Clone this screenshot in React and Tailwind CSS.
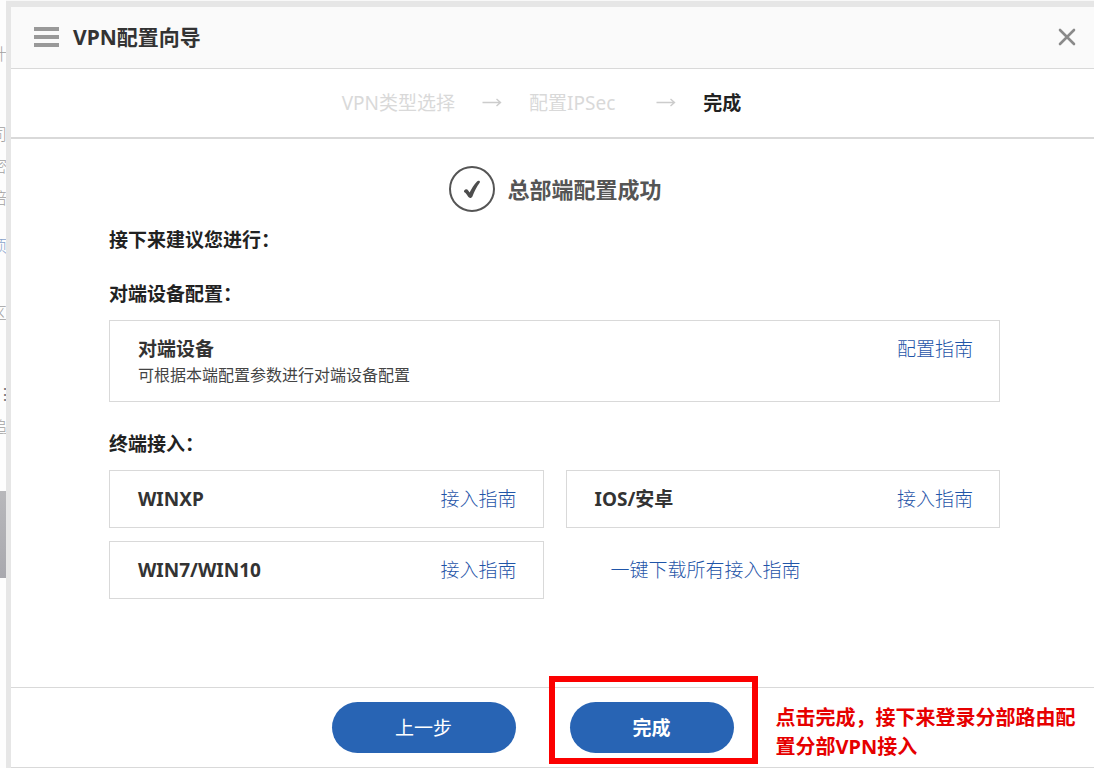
import React from 'react'

const fragments = [
    { text: '计', className: '-ml-[9px] h-[80px] text-neutral-400' },
    { text: '司', className: '-ml-[9px] h-[32px] text-neutral-400' },
    { text: '密', className: '-ml-[9px] h-[32px] text-neutral-400' },
    { text: '倍', className: '-ml-[9px] h-[48px] text-neutral-400' },
    { text: '项', className: '-ml-[9px] h-[67px] text-[#8aa4cc]' },
    { text: '区', className: '-ml-[9px] h-[81px] text-neutral-400' },
    { text: '⋮', className: '-ml-[3px] h-[33px] text-neutral-500 text-center' },
    { text: '追', className: '-ml-[9px] h-[75px] text-neutral-400' },
]

const steps = [
    { label: 'VPN类型选择', className: 'text-[#d9d9d9]' },
    { label: '配置IPSec', className: 'text-[#d9d9d9] pr-[14px]' },
    { label: '完成', className: 'text-[#222] font-bold' },
]

const StepArrow = () => (
    <svg width="20" height="12" viewBox="0 0 20 12" fill="none" stroke="#cccccc" strokeWidth="1.4" aria-hidden="true">
        <path d="M0.5 5.5H18.5M14.5 2L18.5 5.5L14.5 9" />
    </svg>
)

const GuideCard = ({ title, desc, link }) => (
    <div className="flex justify-between items-start border border-[#d9d9d9] pl-7 pr-[26px] py-[14px]">
        <div>
            <h3 className="text-[19px] leading-[28px] font-bold text-[#333]">{title}</h3>
            {desc && <p className="text-[16px] leading-6 text-[#444]">{desc}</p>}
        </div>
        <a href="#guide" className="text-[19px] leading-[28px] font-light text-[#1f55a8]">{link}</a>
    </div>
)

const SectionTitle = ({ children }) => (
    <h2 className="text-[19px] leading-[28px] font-bold text-[#222]">{children}</h2>
)

const App = () => {
    return (
        <div className="flex min-h-screen bg-white font-['Noto_Sans','Noto_Sans_CJK_SC',sans-serif]">
            {/* Page behind the dialog */}
            <aside className="w-[6px] shrink-0 overflow-hidden bg-[#fdfdfd] pt-[43px]">
                {fragments.map((item, index) => (
                    <div key={index} className={`w-4 text-[16px] leading-[22px] font-light ${item.className}`}>
                        {item.text}
                    </div>
                ))}
                <div className="h-[87px] bg-gradient-to-b from-[#b8b8bb] to-[#a8a8ae]" />
            </aside>

            <div className="flex-1 flex border-t border-[#f8f8f8] min-w-0">
                <main className="flex-1 flex flex-col min-w-0 border-l-[5px] border-t-[6px] border-[#e6e6e6]">
                    <header className="flex items-center justify-between h-[62px] pl-[23px] pr-[18px] bg-[#fafafa] border-b border-[#d9d9d9]">
                        <div className="flex items-center gap-[14px] pb-[2px]">
                            <svg width="25" height="20" viewBox="0 0 25 20" fill="#999999" aria-hidden="true">
                                <rect width="25" height="4" />
                                <rect y="8" width="25" height="4" />
                                <rect y="16" width="25" height="4" />
                            </svg>
                            <h1 className="text-[21px] leading-[28px] font-bold text-[#333]">VPN配置向导</h1>
                        </div>
                        <button type="button" aria-label="关闭" className="pb-[2px] cursor-pointer">
                            <svg width="18" height="18" viewBox="0 0 18 18" fill="none" stroke="#8a8a8a" strokeWidth="2.6" strokeLinecap="round">
                                <path d="M2 2L16 16M16 2L2 16" />
                            </svg>
                        </button>
                    </header>

                    <ol className="flex items-center justify-center gap-[27px] h-[70px] pr-[22px] border-b-2 border-[#d9d9d9] text-[19px] leading-[28px]">
                        {steps.map((step, index) => (
                            <React.Fragment key={step.label}>
                                {index > 0 && <li><StepArrow /></li>}
                                <li className={step.className}>{step.label}</li>
                            </React.Fragment>
                        ))}
                    </ol>

                    <section className="flex-1 pl-[98px] pr-[94px] pt-[27px]">
                        <div className="flex items-center justify-center gap-3 pl-[2px]">
                            <svg width="46" height="46" viewBox="0 0 46 46" fill="none" aria-hidden="true">
                                <circle cx="23" cy="23" r="22" stroke="#555555" strokeWidth="2" />
                                <path d="M15.4 24.2C16.6 22.8 18.4 23.2 19.2 24.4L20.6 26.6C22.4 22.6 25 18.4 28 15.4C29.2 14.2 31.6 14.8 30.8 16.4C27.6 20.8 25.4 25.4 23.4 30.4C22.6 32.2 20.2 32.4 19.2 30.8C18.2 28.8 17 27.2 15.4 26.2C14.8 25.6 14.9 24.8 15.4 24.2Z" fill="#4d4d4d" />
                            </svg>
                            <p className="text-[22px] leading-[32px] font-bold text-[#555]">总部端配置成功</p>
                        </div>

                        <div className="mt-[14px]">
                            <SectionTitle>接下来建议您进行：</SectionTitle>
                        </div>

                        <div className="mt-[26px] mb-3">
                            <SectionTitle>对端设备配置：</SectionTitle>
                        </div>
                        <GuideCard title="对端设备" desc="可根据本端配置参数进行对端设备配置" link="配置指南" />

                        <div className="mt-7 mb-3">
                            <SectionTitle>终端接入：</SectionTitle>
                        </div>
                        <div className="grid grid-cols-2 gap-x-[22px] gap-y-[13px]">
                            <GuideCard title="WINXP" link="接入指南" />
                            <GuideCard title="IOS/安卓" link="接入指南" />
                            <GuideCard title="WIN7/WIN10" link="接入指南" />
                            <a href="#download" className="self-center pl-[45px] text-[19px] leading-[28px] font-light text-[#1f55a8]">
                                一键下载所有接入指南
                            </a>
                        </div>
                    </section>

                    <footer className="flex items-center justify-center gap-[54px] h-[81px] pr-10 border-y border-[#d9d9d9]">
                        <button type="button" className="w-[184px] h-[51px] rounded-full bg-[#2864b4] text-white text-[19px] leading-[28px] cursor-pointer">
                            上一步
                        </button>
                        <div className="relative">
                            <button type="button" className="block w-[164px] h-[51px] rounded-full bg-[#2864b4] text-white text-[19px] leading-[28px] font-bold cursor-pointer">
                                完成
                            </button>
                            {/* Red callout */}
                            <div className="absolute -left-[21px] -right-[24px] -top-[26px] -bottom-[11px] border-[6px] border-[#fb0000] pointer-events-none" />
                            <p className="absolute left-[206px] top-px w-[304px] text-[20px] leading-[29px] font-bold text-[#e60000]">
                                点击完成，接下来登录分部路由配置分部VPN接入
                            </p>
                        </div>
                    </footer>
                </main>
            </div>
        </div>
    )
}

export default App
